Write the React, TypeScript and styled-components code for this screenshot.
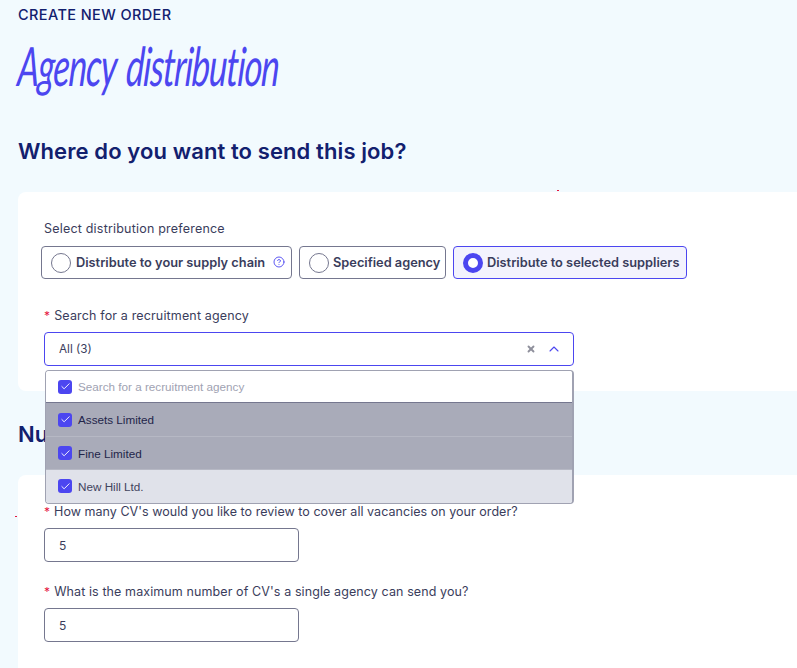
import { createGlobalStyle, styled } from "styled-components";
import { HelpCircle, Check, ChevronUp, X } from "lucide-react";

const colors = {
  page: "#f2fafe",
  navy: "#12206e",
  accent: "#4c46f0",
  text: "#3a3d5c",
  border: "#75778f",
  muted: "#a0a2b2",
  selected: "#a9abb9",
  active: "#e0e2ea",
  radioFill: "#f3f3fd",
};

const Global = createGlobalStyle`
  html, body { margin: 0; padding: 0; background: ${colors.page}; }
  body { font-family: Inter, "Noto Sans", sans-serif; color: ${colors.text}; }
  * { box-sizing: border-box; }
`;

// ── Page frame ───────────────────────────────────────────────────────────────

const Page = styled.div`
  position: relative;
  width: 797px;
  height: 668px;
  overflow: hidden;
  padding: 7px 0 0 18px;
`;

const Eyebrow = styled.div`
  font-size: 14.5px;
  line-height: 16px;
  font-weight: 500;
  letter-spacing: 0.4px;
  color: ${colors.navy};
`;

const ScriptTitle = styled.h1`
  margin: 14px 0 0;
  height: 58px;
  font-family: Lato, "Noto Sans", sans-serif;
  font-style: italic;
  font-weight: 400;
  font-size: 54px;
  line-height: 58px;
  letter-spacing: -1.5px;
  word-spacing: 6px;
  white-space: nowrap;
  color: ${colors.accent};
  transform: scaleX(0.635) skewX(-6deg);
  transform-origin: left center;
`;

const Heading = styled.h2<{ $top: number }>`
  margin: ${p => p.$top}px 0 0;
  font-size: 22px;
  line-height: 28px;
  font-weight: 600;
  letter-spacing: 0.1px;
  color: ${colors.navy};
`;

const Card = styled.section<{ $height: number; $top: number }>`
  margin-top: ${p => p.$top}px;
  height: ${p => p.$height}px;
  background: #fff;
  border-radius: 8px 0 0 8px;
  padding-left: 26px;
`;

// ── Form parts ───────────────────────────────────────────────────────────────

const Label = styled.div<{ $top: number; $track: number }>`
  padding-top: ${p => p.$top}px;
  font-size: 12.5px;
  line-height: 16px;
  letter-spacing: ${p => p.$track}px;
  white-space: nowrap;
  color: ${colors.text};
`;

const Star = styled.span`
  color: #e5173f;
  margin-right: 4px;
  font-size: 12px;
`;

const RadioRow = styled.div`
  display: flex;
  gap: 7px;
  margin: 9px 0 0 -3px;
`;

const RadioButton = styled.div<{ $width: number; $gap: number; $on?: boolean }>`
  display: flex;
  align-items: center;
  gap: ${p => p.$gap}px;
  width: ${p => p.$width}px;
  height: 33px;
  padding-left: 9px;
  border: 1px solid ${p => (p.$on ? colors.accent : colors.border)};
  border-radius: 4px;
  background: ${p => (p.$on ? colors.radioFill : "#fff")};
  font-size: 12.8px;
  font-weight: 600;
  white-space: nowrap;
`;

const RadioDot = styled.span<{ $on?: boolean }>`
  flex: none;
  width: 20px;
  height: 20px;
  border-radius: 50%;
  border: ${p => (p.$on ? `5px solid ${colors.accent}` : `1px solid ${colors.border}`)};
  background: #fff;
`;

const HelpIcon = styled(HelpCircle)`
  margin: -2px 0 0 3px;
  color: ${colors.accent};
`;

const SelectBox = styled.div`
  display: flex;
  align-items: center;
  justify-content: space-between;
  width: 530px;
  height: 34px;
  margin-top: 8px;
  padding: 0 11px 0 14px;
  border: 1px solid ${colors.accent};
  border-radius: 4px;
  font-size: 11.7px;
`;

const SelectIcons = styled.div`
  display: flex;
  align-items: center;
  gap: 10px;
`;

const ClearIcon = styled(X)`
  color: #8f909c;
`;

const ChevronIcon = styled(ChevronUp)`
  color: ${colors.accent};
`;

const NumberBox = styled.div`
  display: flex;
  align-items: center;
  width: 255px;
  height: 34px;
  margin-top: 8px;
  padding-left: 14px;
  border: 1px solid ${colors.border};
  border-radius: 4px;
  font-size: 12px;
`;

// ── Dropdown over the page ───────────────────────────────────────────────────

const Dropdown = styled.div`
  position: absolute;
  left: 45px;
  top: 370px;
  width: 529px;
  height: 134px;
  border: 1px solid ${colors.muted};
  border-right-width: 2px;
  border-radius: 4px;
  background: #fff;
  overflow: hidden;
  font-family: "Liberation Sans", Arial, sans-serif;
  font-size: 11.7px;
`;

const Option = styled.div<{ $tone: "search" | "selected" | "active"; $height: number }>`
  display: flex;
  align-items: center;
  gap: 6px;
  height: ${p => p.$height}px;
  padding-left: 12px;
  background: ${p =>
    p.$tone === "selected" ? colors.selected : p.$tone === "active" ? colors.active : "#fff"};
  color: ${p => (p.$tone === "search" ? colors.muted : p.$tone === "active" ? "#42445e" : "#23254a")};
  border-bottom: 1px solid
    ${p => (p.$tone === "search" ? colors.border : p.$tone === "selected" ? "#b6b8c4" : "transparent")};
`;

const CheckBox = styled.span`
  display: flex;
  align-items: center;
  justify-content: center;
  flex: none;
  width: 14px;
  height: 14px;
  border-radius: 3px;
  background: ${colors.accent};
  color: #fff;
`;

const Speck = styled.i<{ $x: number; $y: number }>`
  position: absolute;
  left: ${p => p.$x}px;
  top: ${p => p.$y}px;
  width: 2px;
  height: 1px;
  background: #e5173f;
`;

const rows = [
  { name: "Assets Limited", height: 34 },
  { name: "Fine Limited", height: 33 },
];

export default function App() {
  return (
    <Page>
      <Global />
      <Eyebrow>CREATE NEW ORDER</Eyebrow>
      <ScriptTitle>Agency distribution</ScriptTitle>
      <Heading $top={42}>Where do you want to send this job?</Heading>

      <Card $top={27} $height={199}>
        <Label $top={29} $track={0.2}>Select distribution preference</Label>
        <RadioRow>
          <RadioButton $width={251} $gap={5}>
            <RadioDot />
            Distribute to your supply chain
            <HelpIcon size={12} strokeWidth={1.8} />
          </RadioButton>
          <RadioButton $width={147} $gap={4}>
            <RadioDot />
            Specified agency
          </RadioButton>
          <RadioButton $width={234} $gap={4} $on>
            <RadioDot $on />
            Distribute to selected suppliers
          </RadioButton>
        </RadioRow>
        <Label $top={29} $track={0.15}>
          <Star>*</Star>Search for a recruitment agency
        </Label>
        <SelectBox>
          All (3)
          <SelectIcons>
            <ClearIcon size={10} strokeWidth={4.5} />
            <ChevronIcon size={16} strokeWidth={1.6} />
          </SelectIcons>
        </SelectBox>
      </Card>

      <Heading $top={29}>Number of CV's</Heading>

      <Card $top={27} $height={200}>
        <Label $top={29} $track={0.04}>
          <Star>*</Star>How many CV's would you like to review to cover all vacancies on your order?
        </Label>
        <NumberBox>5</NumberBox>
        <Label $top={22} $track={0.1}>
          <Star>*</Star>What is the maximum number of CV's a single agency can send you?
        </Label>
        <NumberBox>5</NumberBox>
      </Card>

      <Dropdown>
        <Option $tone="search" $height={32}>
          <CheckBox><Check size={11} strokeWidth={2} /></CheckBox>
          Search for a recruitment agency
        </Option>
        {rows.map(row => (
          <Option key={row.name} $tone="selected" $height={row.height}>
            <CheckBox><Check size={11} strokeWidth={2} /></CheckBox>
            {row.name}
          </Option>
        ))}
        <Option $tone="active" $height={33}>
          <CheckBox><Check size={11} strokeWidth={2} /></CheckBox>
          New Hill Ltd.
        </Option>
      </Dropdown>

      <Speck $x={557} $y={190} />
      <Speck $x={15} $y={516} />
    </Page>
  );
}
